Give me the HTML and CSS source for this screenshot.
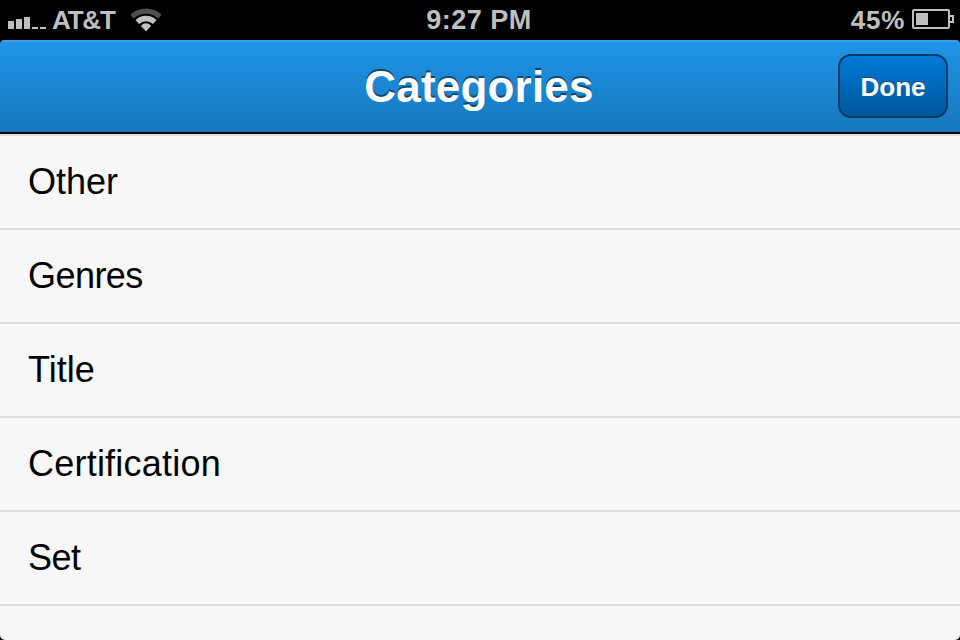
FILE: index.html
```html
<!DOCTYPE html>
<html lang="en">
<head>
<meta charset="utf-8">
<title>Categories</title>
<link rel="stylesheet" href="styles.css">
</head>
<body>
<div class="screen">
  <div class="status">
    <div class="status-left">
      <svg class="signal" width="38" height="14" viewBox="0 0 38 14" fill="#bfbfbf"><path d="M0 6h6v8H0zM8 4h6v10H8zM16 2h6v12h-6zM24 12h6v2h-6zM32 12h6v2h-6z"/></svg>
      <span class="carrier">AT&amp;T</span>
      <svg class="wifi" width="32" height="24" viewBox="0 0 32 24">
        <path d="M0.500 6.500A23 23 0 0 1 31.500 6.500L28.500 10.500A18.500 18.500 0 0 0 3.500 10.500Z" fill="#505050"/>
        <path d="M5.500 12A15 15 0 0 1 26.500 12L23 16A10 10 0 0 0 9 16Z" fill="#c2c2c2"/>
        <path d="M11 18A6 6 0 0 1 21 18L16 23.500Z" fill="#c2c2c2"/>
      </svg>
    </div>
    <span class="time">9:27 PM</span>
    <div class="status-right">
      <span class="percent">45%</span>
      <svg class="battery" width="42" height="20" viewBox="0 0 42 20"><rect x="1" y="1" width="36" height="18" rx="1" fill="none" stroke="#bfbfbf" stroke-width="2"/><path d="M4 4h12v12H4z" fill="#bfbfbf"/><path d="M38 7h3v6h-3" fill="none" stroke="#bfbfbf" stroke-width="2"/></svg>
    </div>
  </div>
  <div class="page">
    <header class="navbar">
      <h1 class="title">Categories</h1>
      <button class="done">Done</button>
    </header>
    <ul class="list">
      <li class="row"><span>Other</span></li>
      <li class="row snug"><span>Genres</span></li>
      <li class="row"><span>Title</span></li>
      <li class="row loose"><span>Certification</span></li>
      <li class="row snug"><span>Set</span></li>
    </ul>
  </div>
</div>
</body>
</html>
```
FILE: styles.css
```css
* { box-sizing: border-box; }
body { margin: 0; background: #000; font-family: "Liberation Sans", Arial, sans-serif; }
.screen { width: 960px; height: 640px; overflow: hidden; display: flex; flex-direction: column; }
.status { height: 40px; flex: none; display: grid; grid-template-columns: 1fr auto 1fr; color: #bfbfbf; font-size: 26px; font-weight: bold; line-height: 40px; }
.status-left { display: flex; padding-left: 8px; }
.signal { margin-top: 15px; }
.carrier { margin-left: 6px; width: 64px; letter-spacing: -1.2px; white-space: nowrap; }
.wifi { margin: 8px 0 0 14px; }
.time { font-size: 27px; letter-spacing: 0.5px; padding-right: 2px; }
.status-right { display: flex; justify-content: flex-end; padding-right: 6px; }
.percent { letter-spacing: 0.7px; }
.battery { margin: 9px 0 0 7px; }
.page { flex: 1; border-radius: 5px; overflow: hidden; background: #f7f7f7; }
.navbar { height: 94px; display: grid; grid-template-columns: 1fr auto 1fr; align-items: center; padding: 0 12px 2px; border-bottom: 2px solid #000; background: linear-gradient(#1f95e8, #1777bc); box-shadow: inset 0 2px 0 #3a9fe8; }
.title { grid-column: 2; margin: 0; padding: 3px 2px 0 0; font-size: 44px; line-height: 50px; color: #fff; text-shadow: 0 -2px 0 #0d466f; letter-spacing: 0.2px; }
.done { grid-column: 3; justify-self: end; width: 110px; height: 64px; margin-top: 2px; padding: 2px 0 0; border: 2px solid #033963; border-radius: 13px; background: linear-gradient(#007bd7, #00579b); color: #fff; font: bold 26px "Liberation Sans", Arial, sans-serif; text-shadow: 0 -1px 0 #034a82; }
.list { list-style: none; margin: 0; padding: 0; border-top: 2px solid #dedede; }
.row { height: 94px; display: flex; align-items: center; padding: 0 28px; border-bottom: 2px solid #dcdcdc; font-size: 36px; color: #000; }
.snug { letter-spacing: -0.55px; }
.loose { letter-spacing: 0.22px; }
```
